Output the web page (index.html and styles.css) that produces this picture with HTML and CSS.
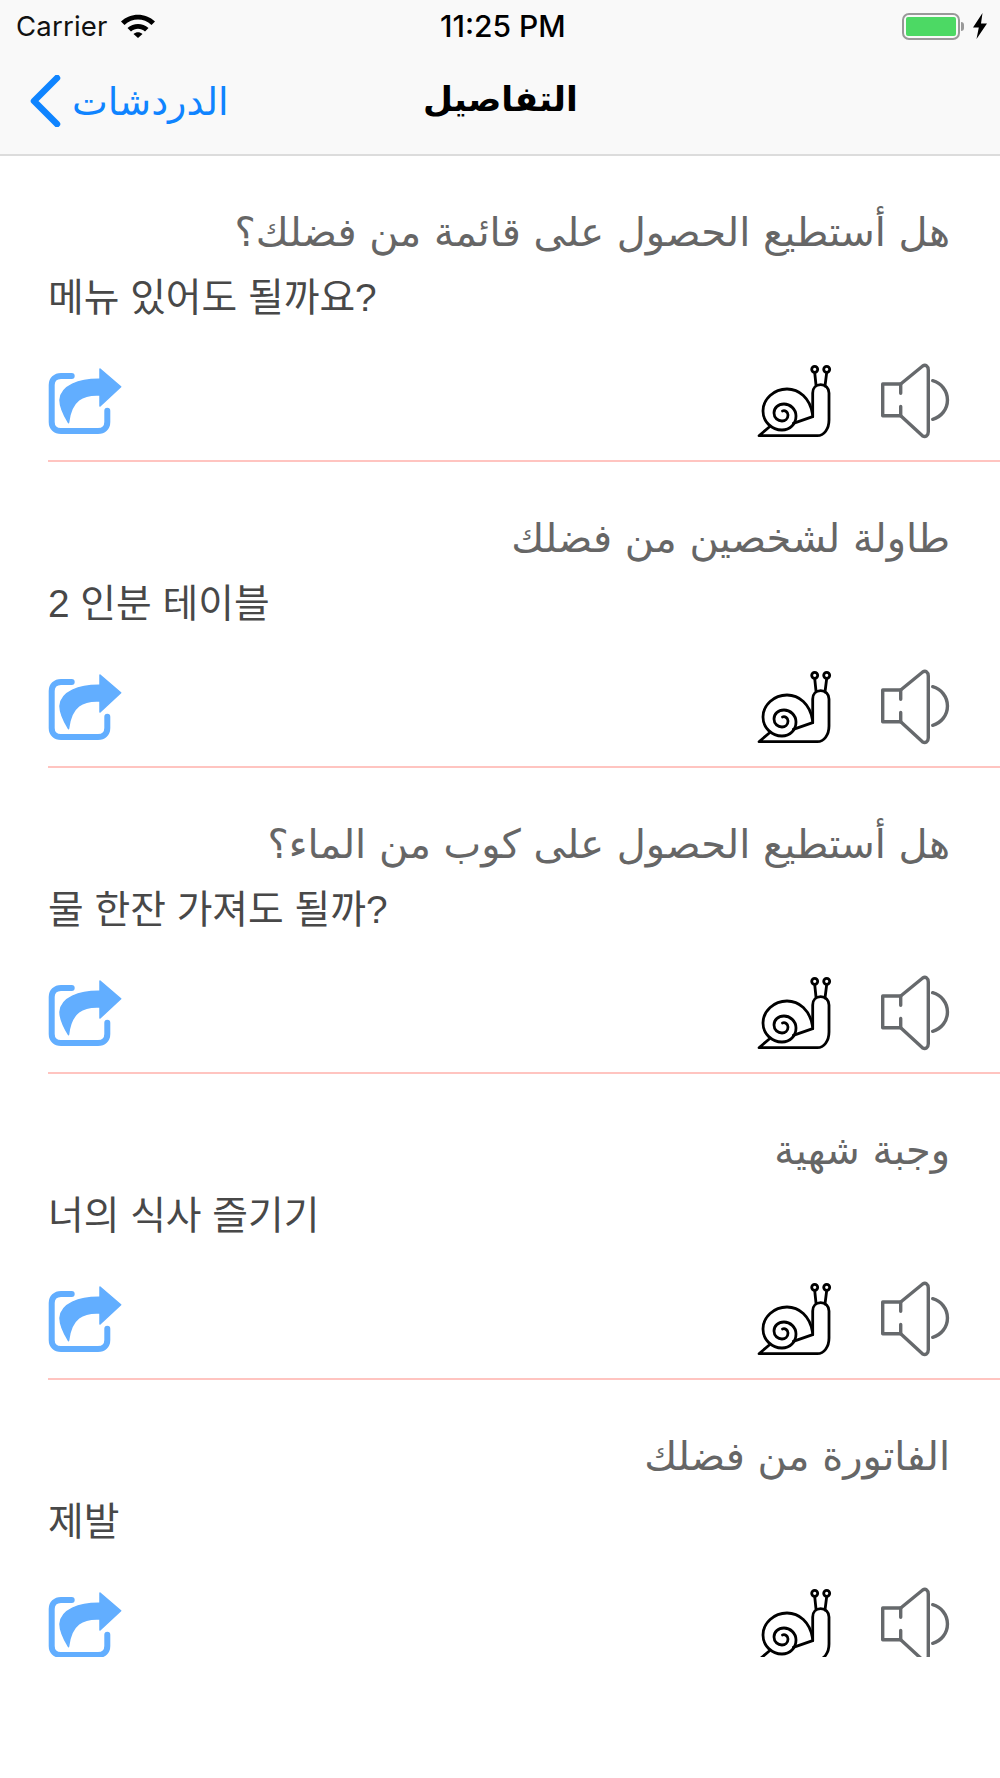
FILE: index.html
```html
<!DOCTYPE html>
<html>
  <head>
    <meta charset="utf-8">
    <title>التفاصيل</title>
    <link rel="stylesheet" href="styles.css">
  </head>
  <body>
    <svg class="defs" width="0" height="0">
      <symbol id="snail" viewBox="0 0 80 80">
        <g fill="none" stroke="#000" stroke-width="2.8" stroke-linecap="round" stroke-linejoin="round">
          <circle cx="59.7" cy="9.3" r="3"/>
          <circle cx="71.7" cy="9.3" r="3"/>
          <path d="M59.7 12.5L61 25M71.7 12.5L70 26"/>
          <path d="M57.7 56.7V33C57.7 28 61 24.7 65.7 24.7C70.5 24.7 74 28 74 33V60C74 69 69 75.7 62.3 75.7H4L14 67.3"/>
          <path d="M57.7 56.7L38.3 63.3"/>
          <path d="M57.5 54C55 38 44 29 32 29C19 29 8 39 8 51C8 62 17 70 27 70C35 70 41 64 41 56C41 49 35 44 29 44C23 44 19 48 19 53C19 58 23 61 27 61C30 61 33 59 33 55C33 52 30 50 27.5 51"/>
        </g>
      </symbol>
      <symbol id="speaker" viewBox="0 0 80 80">
        <g fill="none" stroke="#66696c" stroke-width="3.400" stroke-linecap="round" stroke-linejoin="round">
          <path d="M20.7 33.3V24H2.7V55.7H20.7V46.5"/>
          <path d="M20.7 24L42.7 6C45.5 4.2 48.3 6 48.3 10V71.7C48.3 75.5 45.5 77.5 42.7 76L20.7 55.7"/>
          <path d="M52.7 20.7A20 20 0 0 1 52.7 59.3"/>
        </g>
      </symbol>
      <symbol id="share" viewBox="0 0 80 80">
        <path d="M26.7 16H16C10.5 16 6.7 19.7 6.7 25V62C6.7 67.5 10.5 71 16 71H53C58.5 71 62.3 67.5 62.3 62V50.7" fill="none" stroke="#62aeff" stroke-width="6" stroke-linecap="round"/>
        <path d="M55 9L75.7 26.7L55 46V35C38 34 26 40 23.5 62.7C17 52 15 45 15 40C16 26 34 19 55 19.3Z" fill="#62aeff" stroke="#62aeff" stroke-width="1.5" stroke-linejoin="round"/>
      </symbol>
    </svg>

    <div class="topbar">
      <div class="status">
        <div class="status-left">
          <span class="carrier">Carrier</span>
          <svg class="wifi" width="36" height="26" viewBox="0 0 36 26">
            <path d="M1 9.5C10.500 0.500 25.500 0.500 35 9.500L31.500 13C23.500 5.800 12.500 5.800 4.500 13Z"/>
            <path d="M7.500 16C13.500 10.500 22.500 10.500 28.500 16L25 19.500C20.800 15.800 15.200 15.800 11 19.500Z"/>
            <path d="M13.500 22C16.300 19.600 19.700 19.600 22.500 22L18 26Z"/>
          </svg>
        </div>
        <span class="clock">11:25 PM</span>
        <div class="status-right">
          <div class="battery"><div class="battery-fill"></div></div>
          <div class="battery-tip"></div>
          <svg class="bolt" width="16" height="26" viewBox="0 0 16 26">
            <path d="M10.500 0L1 14.500H6.800L4.500 26L15 10.500H9Z"/>
          </svg>
        </div>
      </div>
      <div class="navbar">
        <div class="back">
          <svg class="chevron" width="32" height="52" viewBox="0 0 32 52">
            <path d="M28 3L5 26L28 49" fill="none" stroke="#0f84ff" stroke-width="6.500" stroke-linecap="round" stroke-linejoin="round"/>
          </svg>
          <span class="back-label" dir="rtl">الدردشات</span>
        </div>
        <span class="nav-title" dir="rtl">التفاصيل</span>
      </div>
    </div>

    <div class="list">
      <div class="row">
        <p class="arabic" dir="rtl">هل أستطيع الحصول على قائمة من فضلك؟</p>
        <p class="korean">메뉴 있어도 될까요?</p>
        <div class="actions">
          <svg class="icon"><use href="#share"/></svg>
          <div class="audio">
            <svg class="icon"><use href="#snail"/></svg>
            <svg class="icon"><use href="#speaker"/></svg>
          </div>
        </div>
      </div>
      <div class="row">
        <p class="arabic" dir="rtl">طاولة لشخصين من فضلك</p>
        <p class="korean">2 인분 테이블</p>
        <div class="actions">
          <svg class="icon"><use href="#share"/></svg>
          <div class="audio">
            <svg class="icon"><use href="#snail"/></svg>
            <svg class="icon"><use href="#speaker"/></svg>
          </div>
        </div>
      </div>
      <div class="row">
        <p class="arabic" dir="rtl">هل أستطيع الحصول على كوب من الماء؟</p>
        <p class="korean">물 한잔 가져도 될까?</p>
        <div class="actions">
          <svg class="icon"><use href="#share"/></svg>
          <div class="audio">
            <svg class="icon"><use href="#snail"/></svg>
            <svg class="icon"><use href="#speaker"/></svg>
          </div>
        </div>
      </div>
      <div class="row">
        <p class="arabic" dir="rtl">وجبة شهية</p>
        <p class="korean">너의 식사 즐기기</p>
        <div class="actions">
          <svg class="icon"><use href="#share"/></svg>
          <div class="audio">
            <svg class="icon"><use href="#snail"/></svg>
            <svg class="icon"><use href="#speaker"/></svg>
          </div>
        </div>
      </div>
      <div class="row row-last">
        <p class="arabic" dir="rtl">الفاتورة من فضلك</p>
        <p class="korean">제발</p>
        <div class="actions">
          <svg class="icon"><use href="#share"/></svg>
          <div class="audio">
            <svg class="icon"><use href="#snail"/></svg>
            <svg class="icon"><use href="#speaker"/></svg>
          </div>
        </div>
      </div>
    </div>
  </body>
</html>
```

FILE: styles.css
```css
html,body{margin:0;padding:0}
body{width:1000px;height:1778px;overflow:hidden;background:#fff;font-family:"Inter","Noto Sans CJK KR","DejaVu Sans",sans-serif}
p{margin:0}
.defs{display:block;height:0}

.topbar{height:154px;background:#f9f9f9;border-bottom:2px solid #dcdcdc}
.status{height:52px;display:flex;align-items:center;justify-content:space-between;position:relative;padding:0 12px 0 16px}
.status-left{display:flex;align-items:center;gap:12px}
.carrier{font-size:27.500px;color:#111;letter-spacing:.2px}
.wifi{fill:#000;margin-top:-2px}
.clock{font-size:30px;font-weight:500;color:#000;position:absolute;left:440px;top:8px}
.status-right{display:flex;align-items:center}
.battery{width:58px;height:27px;border:2px solid #999;border-radius:7px;padding:2px;box-sizing:border-box;margin-right:1px}
.battery-fill{height:100%;background:#4cd964;border-radius:2px}
.battery-tip{width:3px;height:9px;background:#999;border-radius:0 3px 3px 0;margin-right:8px}
.bolt{fill:#000}

.navbar{height:102px;display:flex;align-items:center;position:relative;padding-bottom:4px;box-sizing:border-box}
.back{display:flex;align-items:center;margin-left:29px;gap:11px}
.back-label{font-size:38px;line-height:50px;color:#0f84ff}
.nav-title{font-size:34.500px;font-weight:700;color:#000;position:absolute;left:423px;top:26px}

.row{height:304px;margin-left:48px;border-bottom:2px solid #ffc4c0;padding-right:40px;overflow:hidden}
.row-last{border-bottom:none;height:277px}
.arabic{font-size:40px;line-height:44px;color:#666;padding:54px 10px 0 0;font-family:"DejaVu Sans",sans-serif}
.korean{font-size:38.800px;line-height:56px;color:#484848;margin-top:16px;font-family:"Liberation Sans","Noto Sans CJK KR",sans-serif}
.actions{display:flex;justify-content:space-between;align-items:flex-start;margin-top:34px}
.audio{display:flex;gap:45px}
.icon{width:80px;height:80px;display:block;flex:none}
.actions>.icon{margin-left:-3px}
```
